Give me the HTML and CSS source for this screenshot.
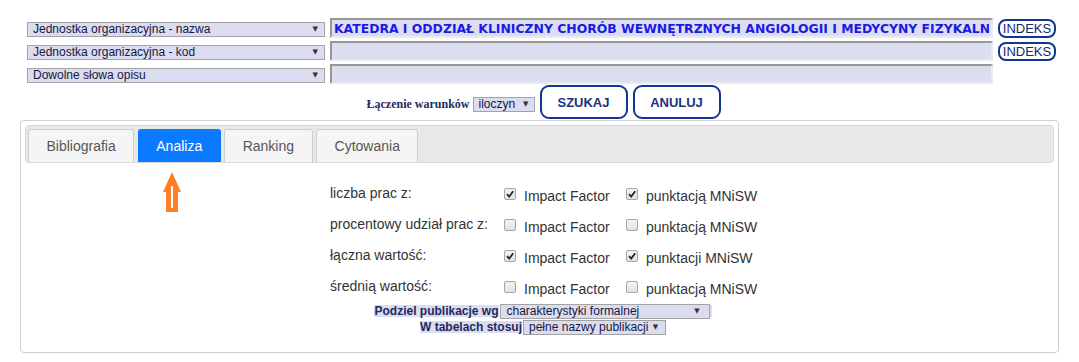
FILE: index.html
```html
<!doctype html>
<html lang="pl">
	<head>
		<meta charset="UTF-8" />
		<title>Analiza publikacji</title>
		<link rel="stylesheet" href="styles.css">
	</head>
	<body>
		<form class="search">
			<div class="search-row">
				<div class="select select-field"><span>Jednostka organizacyjna - nazwa</span><span class="caret">▼</span></div>
				<input class="field-input" type="text" value="KATEDRA I ODDZIAŁ KLINICZNY CHORÓB WEWNĘTRZNYCH ANGIOLOGII I MEDYCYNY FIZYKALN" />
				<button type="button" class="btn-index">INDEKS</button>
			</div>
			<div class="search-row">
				<div class="select select-field"><span>Jednostka organizacyjna - kod</span><span class="caret">▼</span></div>
				<input class="field-input" type="text" value="" />
				<button type="button" class="btn-index">INDEKS</button>
			</div>
			<div class="search-row">
				<div class="select select-field"><span>Dowolne słowa opisu</span><span class="caret">▼</span></div>
				<input class="field-input" type="text" value="" />
			</div>

			<div class="actions">
				<span class="connector">Łączenie warunków</span>
				<div class="select select-small"><span>iloczyn</span><span class="caret">▼</span></div>
				<button type="button" class="btn-main">SZUKAJ</button>
				<button type="button" class="btn-main">ANULUJ</button>
			</div>
		</form>

		<section class="panel">
			<ul class="tabs">
				<li class="tab">Bibliografia</li>
				<li class="tab tab-active">Analiza</li>
				<li class="tab">Ranking</li>
				<li class="tab">Cytowania</li>
			</ul>

			<div class="analysis">
				<svg class="hint-arrow" width="18" height="40" viewBox="0 0 18 40">
					<path d="M9 0 L18 20 L15 20 L15 40 L3 40 L3 20 L0 20 Z" fill="#ff7f27" />
					<rect x="8" y="14" width="2" height="22" fill="#fff" />
				</svg>

				<div class="options">
					<span class="opt-label">liczba prac z:</span>
					<label class="opt"><span class="check is-checked"><svg viewBox="0 0 10 10"><path d="M2 5.2 L4.2 7.6 L8.2 2.2" /></svg></span>Impact Factor</label>
					<label class="opt"><span class="check is-checked"><svg viewBox="0 0 10 10"><path d="M2 5.2 L4.2 7.6 L8.2 2.2" /></svg></span>punktacją MNiSW</label>

					<span class="opt-label">procentowy udział prac z:</span>
					<label class="opt"><span class="check"></span>Impact Factor</label>
					<label class="opt"><span class="check"></span>punktacją MNiSW</label>

					<span class="opt-label">łączna wartość:</span>
					<label class="opt"><span class="check is-checked"><svg viewBox="0 0 10 10"><path d="M2 5.2 L4.2 7.6 L8.2 2.2" /></svg></span>Impact Factor</label>
					<label class="opt"><span class="check is-checked"><svg viewBox="0 0 10 10"><path d="M2 5.2 L4.2 7.6 L8.2 2.2" /></svg></span>punktacji MNiSW</label>

					<span class="opt-label">średnią wartość:</span>
					<label class="opt"><span class="check"></span>Impact Factor</label>
					<label class="opt"><span class="check"></span>punktacją MNiSW</label>
				</div>

				<div class="split">
					<div class="split-row">
						<span class="split-label">Podziel publikacje wg</span>
						<div class="select select-split"><span>charakterystyki formalnej</span><span class="caret">▼</span></div>
						<span class="split-tail"></span>
					</div>
					<div class="split-row">
						<span class="split-label">W tabelach stosuj</span>
						<div class="select select-names"><span>pełne nazwy publikacji</span><span class="caret">▼</span></div>
					</div>
				</div>
			</div>
		</section>
	</body>
</html>
```

FILE: styles.css
```css
:root {
	--color-lavender: #dcdcf0;
	--color-navy: #1e2a5e;
	--color-select-text: #16183f;
	--color-button: #0f3790;
	--color-input-text: #1a1ae6;
	--color-tab-blue: #0a7bff;
	--color-text: #333333;
}

body {
	margin: 0;
	background-color: #ffffff;
	color: var(--color-text);
	font-family: 'Liberation Sans', Arial, sans-serif;
}

/* Search form */

.search {
	margin: 0;
	padding-top: 18px;
}

.search-row {
	display: flex;
	align-items: center;
	gap: 5px;
	height: 20px;
	margin-bottom: 3px;
	padding-left: 27px;
}

.search-row:nth-child(3) {
	margin-bottom: 1px;
}

.select {
	display: flex;
	align-items: center;
	justify-content: space-between;
	box-sizing: border-box;
	height: 15px;
	padding: 0 6px 0 5px;

	border: 1px solid #a3a3a3;
	background-color: var(--color-lavender);
	color: var(--color-select-text);

	font-size: 12px;
	font-weight: 400;
	line-height: 13px;
	white-space: nowrap;
}

.caret {
	font-family: 'DejaVu Sans', sans-serif;
	font-size: 7px;
	color: #333333;
}

.select-field {
	width: 298px;
	margin-top: 2px;
}

.field-input {
	box-sizing: border-box;
	width: 663px;
	height: 20px;
	padding: 0 2px;

	border: 2px solid;
	border-color: #979797 #eaeaf4 #eaeaf4 #979797;
	background-color: #dcdef0;
	color: var(--color-input-text);
	outline: none;

	font-family: 'DejaVu Sans', Verdana, sans-serif;
	font-size: 12.4px;
	font-weight: 700;
}

.btn-index {
	box-sizing: border-box;
	width: 58px;
	height: 19px;
	padding: 0;

	border: 2px solid var(--color-button);
	border-radius: 8px;
	background-color: #ffffff;
	color: #13296e;

	font-family: 'Liberation Sans', Arial, sans-serif;
	font-size: 13px;
	line-height: 15px;
}

.actions {
	display: flex;
	align-items: center;
	justify-content: center;
	padding: 0 0 1px 8px;
}

.connector {
	margin-right: 3px;
	color: var(--color-navy);
	font-family: 'Liberation Serif', 'Times New Roman', serif;
	font-size: 12px;
	font-weight: 700;
	position: relative;
	top: 2px;
}

.select-small {
	width: 62px;
	margin-right: 5px;
	margin-top: 4px;
	padding: 0 5px;
}

.btn-main {
	box-sizing: border-box;
	width: 88px;
	height: 34px;
	margin-right: 5px;

	border: 2px solid var(--color-button);
	border-radius: 9px;
	background-color: #ffffff;
	color: #1a3080;

	font-family: 'Liberation Sans', Arial, sans-serif;
	font-size: 13px;
	font-weight: 700;
}

.btn-main:last-child {
	margin-right: 0;
}

/* Tabs panel */

.panel {
	margin: 0 20px;
	padding: 4px 4px 0;
	border: 1px solid #cfcfcf;
	border-radius: 4px;
}

.tabs {
	display: flex;
	gap: 3.5px;
	margin: 0;
	padding: 3px 2px 0;
	list-style: none;

	border: 1px solid #d9d9d9;
	border-radius: 4px;
	background-color: #e8e8e8;
}

.tab {
	box-sizing: border-box;
	height: 33px;
	padding: 0 17.5px;

	border: 1px solid #cdcdcd;
	border-bottom: none;
	border-radius: 3px 3px 0 0;
	background-color: #f5f5f5;
	color: #555555;

	font-size: 14px;
	line-height: 33px;
}

.tab-active {
	border-color: var(--color-tab-blue);
	background-color: var(--color-tab-blue);
	color: #ffffff;
}

.analysis {
	position: relative;
	display: flex;
	flex-direction: column;
	align-items: center;
	padding: 20px 0 17px 7px;
}

.hint-arrow {
	position: absolute;
	top: 9px;
	left: 138px;
}

.options {
	display: grid;
	grid-template-columns: 174px 122px 130px;
	row-gap: 8px;
	font-size: 14px;
	line-height: 20px;
	white-space: nowrap;
}

.opt {
	display: flex;
	align-items: flex-start;
	gap: 8px;
	padding-top: 3px;
}

.check {
	flex: none;
	box-sizing: border-box;
	width: 12px;
	height: 12px;
	margin-top: 2px;

	border: 1px solid #a6a6a6;
	border-radius: 2px;
	background: linear-gradient(#f2f2f2, #e3e3e3);
}

.check svg {
	display: block;
	width: 10px;
	height: 10px;
}

.check path {
	fill: none;
	stroke: #262626;
	stroke-width: 1.8;
}

.split {
	display: flex;
	flex-direction: column;
	align-items: center;
	margin-top: 4px;
	color: var(--color-navy);
	font-size: 12px;
	font-weight: 700;
}

.split-row {
	display: flex;
	align-items: center;
	height: 16px;
}

.split-label {
	margin-right: 1px;
	background-color: var(--color-lavender);
	line-height: 12px;
}

.split-tail {
	width: 2px;
	height: 12px;
	background-color: var(--color-lavender);
}

.select-split {
	width: 210px;
	padding-left: 6px;
	padding-right: 9px;
}

.select-names {
	width: 143px;
	padding-right: 7px;
}
```
